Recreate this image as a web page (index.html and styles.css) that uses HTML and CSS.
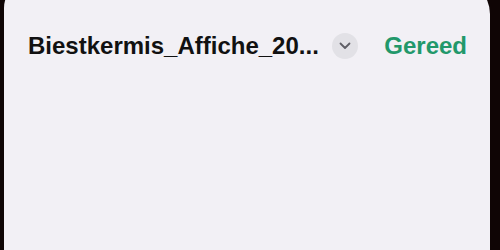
FILE: index.html
```html
<!DOCTYPE html>
<html>
<head>
<meta charset="utf-8">
<link rel="stylesheet" href="styles.css">
</head>
<body>
<div class="sheet">
  <header class="bar">
    <div class="title-wrap">
      <span class="title">Biestkermis_Affiche_20...</span>
      <span class="chev">
        <svg width="12" height="8" viewBox="0 0 12 8"><path d="M1.5 1.5 L6 6 L10.5 1.5" fill="none" stroke="#5f5e66" stroke-width="1.8" stroke-linecap="round" stroke-linejoin="round"/></svg>
      </span>
    </div>
    <span class="done">Gereed</span>
  </header>
</div>
</body>
</html>
```
FILE: styles.css
```css
html, body {
  margin: 0;
  padding: 0;
  background: #0f0505;
  width: 500px;
  height: 250px;
  overflow: hidden;
}
.sheet {
  margin-left: 4px;
  width: 486px;
  height: 270px;
  margin-top: -20px;
  background: #f2f0f5;
  border-radius: 28px 34px 0 0;
  padding-top: 20px;
  box-sizing: border-box;
  font-family: "Liberation Sans", Arial, sans-serif;
}
.bar {
  display: flex;
  align-items: center;
  justify-content: space-between;
  padding: 32px 23px 0 24px;
  height: 28px;
}
.title-wrap {
  display: flex;
  align-items: center;
  gap: 13px;
}
.title {
  font-size: 24px;
  font-weight: 700;
  color: #111;
}
.chev {
  width: 26px;
  height: 26px;
  border-radius: 50%;
  background: #e2e1e6;
  display: flex;
  align-items: center;
  justify-content: center;
}
.done {
  font-size: 24px;
  font-weight: 700;
  color: #22986a;
}
```
